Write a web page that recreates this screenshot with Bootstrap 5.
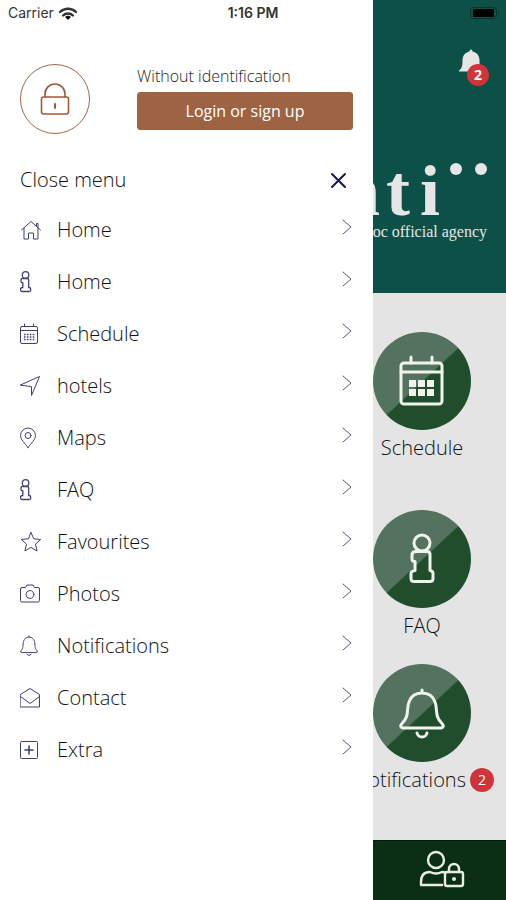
<!DOCTYPE html>
<html lang="en">
<head>
<meta charset="utf-8">
<meta name="viewport" content="width=device-width, initial-scale=1">
<title>Menu</title>
<link href="https://cdn.jsdelivr.net/npm/bootstrap@5.3.0/dist/css/bootstrap.min.css" rel="stylesheet">
<style>
body{font-family:"Open Sans","Noto Sans",sans-serif;font-weight:300;color:#111;background:#fff}
svg{fill:none;stroke:currentColor;stroke-linecap:round;stroke-linejoin:round;flex:none;display:block}
.solid{fill:currentColor;stroke:none}
.statusbar{font:400 14px/26px Inter,sans-serif;z-index:5;color:#333}
.statusbar .clock{font-weight:600}
.drawer{padding:64px 20px 24px}
.lock-ring{width:70px;height:70px;border:1px solid #a0664c;color:#a0573a}
.account{width:216px}
.account-note{font-size:16px;line-height:24px;color:#222}
.btn-login{--bs-btn-color:#fff;--bs-btn-bg:#9d6343;--bs-btn-border-color:#9d6343;--bs-btn-hover-color:#fff;--bs-btn-hover-bg:#87533a;font-size:16px;line-height:24px;border-radius:3px;padding:6px}
.menu-head{font-size:20px;line-height:32px;margin-top:30px;padding-right:4px}
.close-btn{color:#17174f}
.menu-link{height:52px;font-size:20px;color:#111;gap:13px}
.menu-link svg{color:#3f4170}
.menu-link .chev{color:#55576a;margin-top:-6px}
.menu-list{margin-top:8px}
.peek{width:133px;background:#e4e4e4}
.hero{height:293px;background:#0d5047;color:#e6e6e6;padding:48px 19px 0 0}
.bell-btn{width:30px;height:38px;margin-right:-2px;color:#e6e6e6}
.count{width:22px;height:22px;font-size:14px;line-height:22px;background:#d0343a;color:#fff}
.bell-btn .count{right:0;bottom:0}
.brand{font:700 72px/62px "Liberation Serif",serif;margin-top:74px;gap:10px}
.brand-wide{margin-right:-4px}
.brand-dots{gap:13px;padding-top:3px}
.brand-dot{width:12px;height:12px;background:currentColor}
.brand-sub{font:400 16px/20px "Liberation Serif",serif}
.tiles{padding-top:39px}
.tile{color:#111;font-size:20px;line-height:28px}
.tile-icon{width:98px;height:98px;margin-right:35px;color:#f0f2ec;background:linear-gradient(137deg,#54735f 50%,#204e2c 51%)}
.tile-name{padding-top:4px}
.tile-mid{width:98px;margin-right:35px}
.tile+.tile{margin-top:48px}
.tile+.tile.tile-near{margin-top:24px}
.tile-wide{padding-right:12px;gap:4px}
.count{font-weight:400}
.tile-wide .count{width:24px;height:24px;line-height:24px}
.dock{height:60px;background:#0a2f14;color:#e8eee4;border-top:1px solid #061c0b;padding:0 0 4px 4px}
</style>
<script src="https://cdn.jsdelivr.net/npm/bootstrap@5.3.0/dist/js/bootstrap.bundle.min.js"></script>
</head>
<body>
<svg width="0" height="0" class="position-absolute" aria-hidden="true">
<symbol id="home" viewBox="0 0 24 24"><path d="M2.500 12 12 3.500l9.500 8.500M5 10v11h4.500v-6h5v6H19V10M17.500 8V5.500h1.500v4"/></symbol>
<symbol id="info" viewBox="0 0 24 24"><g stroke-width="1.300"><circle cx="5.500" cy="5" r="3.300"/><path d="M3.500 8.500h3.800q1.400 0 1.400 1.400v7.600q2 0 2 1.500v1q0 1.500-1.500 1.500H2q-1.500 0-1.500-1.500V19q0-1.500 2.300-1.500v-4.800H2q-1-.2-1-1.300V10q0-1.500 1.200-1.500z"/></g></symbol>
<symbol id="calendar" viewBox="0 0 24 24"><rect x=".5" y="4.500" width="17" height="17" rx="1.500"/><path d="M.5 8.500h17M4.500 2v2.500M13.500 2v2.500"/><path d="M4 12.500h10.500M4 15h10.500M4 17.500h10.500" stroke-width="1.600" stroke-dasharray="1.600 1.300" stroke-linecap="butt"/></symbol>
<symbol id="plane" viewBox="0 0 24 24"><path d="m.5 11 19-8.500L11.500 21.500v-8.500z"/></symbol>
<symbol id="pin" viewBox="0 0 24 24"><path d="M8 21.500C5 17.500.5 13.500.5 9.500a7.500 7.500 0 0 1 15 0c0 4-4.500 8-7.500 12z"/><circle cx="8" cy="9.500" r="3"/></symbol>
<symbol id="star" viewBox="0 0 24 24"><path d="m11 2.500 2.800 6.300 6.900.7-5.200 4.600 1.600 6.900-6.100-3.600L4.900 21l1.600-6.900L1.300 9.500l6.900-.7z"/></symbol>
<symbol id="camera" viewBox="0 0 24 24"><path d="M2 5.500h3.500l1.500-2.500h6l1.500 2.500h3.500q1.500 0 1.500 1.500v11.500q0 1.500-1.500 1.500H2q-1.500 0-1.500-1.500V7Q.5 5.500 2 5.500z"/><circle cx="10" cy="12.500" r="4"/></symbol>
<symbol id="bell" viewBox="0 0 24 24"><path d="M9 2v1M1.500 18.500q-1.500-.3-.6-1.600C4 13.500 2.500 11 3.500 7.500 4.300 4.700 6.300 3 9 3s4.700 1.700 5.500 4.500c1 3.500-.5 6 2.600 9.400q.9 1.300-.6 1.600zM7 20.500q2 2.200 4 0"/></symbol>
<symbol id="mail" viewBox="0 0 24 24"><path d="M.5 8.500 10 2.500l9.500 6V21H.5zM.5 10.500 10 17.500l9.500-7"/></symbol>
<symbol id="plus" viewBox="0 0 24 24"><rect x=".5" y="3.500" width="17" height="17" rx="1"/><path d="M9 8v8M5 12h8" stroke-width="1.600"/></symbol>
<symbol id="chev" viewBox="0 0 12 18"><path d="m2 2 8 7-8 7"/></symbol>
</svg>
<div class="d-flex min-vh-100 position-relative">
<header class="statusbar position-absolute top-0 start-0 w-100 d-flex align-items-center">
<div class="d-flex align-items-center gap-1 ps-2 flex-fill w-25">Carrier
<svg width="20" height="15" viewBox="0 0 20 15" stroke-width="2.400" stroke="#111" stroke-linecap="butt"><path d="M2 6a11.500 11.500 0 0 1 16 0M5 9.500a7.200 7.200 0 0 1 10 0"/><path d="m10 14-3-3a4.200 4.200 0 0 1 6 0z" fill="#111" stroke="none"/></svg></div>
<div class="clock text-center">1:16 PM</div>
<div class="d-flex justify-content-end flex-fill w-25"><svg class="me-1" width="32" height="14" viewBox="0 0 32 14" aria-label="Battery full"><rect x=".5" y="1.500" width="26" height="11" rx="3" stroke="#07342d"/><rect x="3" y="3" width="21" height="8" rx="1" fill="#000" stroke="none"/><path d="M28 5v4q2-2 0-4" fill="#07342d" stroke="none"/></svg></div>
</header>
<nav class="drawer flex-grow-1 bg-white" aria-label="Main menu">
<div class="d-flex justify-content-between">
<div class="lock-ring rounded-circle d-flex align-items-center justify-content-center">
<svg width="30" height="36" viewBox="0 0 30 36" stroke-width="1.600"><rect x="1.500" y="16" width="27" height="17" rx="2"/><path d="M5 16v-3a10 10 0 0 1 20 0v3"/><path d="M15 23v4" stroke-width="2"/></svg></div>
<div class="account"><div class="account-note">Without identification</div>
<button type="button" class="btn btn-login w-100 mt-1">Login or sign up</button></div>
</div>
<div class="menu-head d-flex justify-content-between align-items-center"><span>Close menu</span>
<button type="button" class="close-btn border-0 bg-transparent p-0" aria-label="Close menu"><svg width="20" height="18" viewBox="0 0 20 18" stroke-width="2"><path d="m3 3 13 13M16 3 3 16"/></svg></button></div>
<ul class="menu-list list-unstyled mb-0">
<li><a href="#" class="menu-link d-flex align-items-center text-decoration-none"><svg width="24" height="24" viewBox="1 0 24 24"><use href="#home" width="24" height="24"/></svg><span class="flex-grow-1">Home</span><svg class="chev" width="12" height="18"><use href="#chev"/></svg></a></li>
<li><a href="#" class="menu-link d-flex align-items-center text-decoration-none"><svg width="24" height="24"><use href="#info"/></svg><span class="flex-grow-1">Home</span><svg class="chev" width="12" height="18"><use href="#chev"/></svg></a></li>
<li><a href="#" class="menu-link d-flex align-items-center text-decoration-none"><svg width="24" height="24"><use href="#calendar"/></svg><span class="flex-grow-1">Schedule</span><svg class="chev" width="12" height="18"><use href="#chev"/></svg></a></li>
<li><a href="#" class="menu-link d-flex align-items-center text-decoration-none"><svg width="24" height="24"><use href="#plane"/></svg><span class="flex-grow-1">hotels</span><svg class="chev" width="12" height="18"><use href="#chev"/></svg></a></li>
<li><a href="#" class="menu-link d-flex align-items-center text-decoration-none"><svg width="24" height="24"><use href="#pin"/></svg><span class="flex-grow-1">Maps</span><svg class="chev" width="12" height="18"><use href="#chev"/></svg></a></li>
<li><a href="#" class="menu-link d-flex align-items-center text-decoration-none"><svg width="24" height="24"><use href="#info"/></svg><span class="flex-grow-1">FAQ</span><svg class="chev" width="12" height="18"><use href="#chev"/></svg></a></li>
<li><a href="#" class="menu-link d-flex align-items-center text-decoration-none"><svg width="24" height="24"><use href="#star"/></svg><span class="flex-grow-1">Favourites</span><svg class="chev" width="12" height="18"><use href="#chev"/></svg></a></li>
<li><a href="#" class="menu-link d-flex align-items-center text-decoration-none"><svg width="24" height="24"><use href="#camera"/></svg><span class="flex-grow-1">Photos</span><svg class="chev" width="12" height="18"><use href="#chev"/></svg></a></li>
<li><a href="#" class="menu-link d-flex align-items-center text-decoration-none"><svg width="24" height="24"><use href="#bell"/></svg><span class="flex-grow-1">Notifications</span><svg class="chev" width="12" height="18"><use href="#chev"/></svg></a></li>
<li><a href="#" class="menu-link d-flex align-items-center text-decoration-none"><svg width="24" height="24"><use href="#mail"/></svg><span class="flex-grow-1">Contact</span><svg class="chev" width="12" height="18"><use href="#chev"/></svg></a></li>
<li><a href="#" class="menu-link d-flex align-items-center text-decoration-none"><svg width="24" height="24"><use href="#plus"/></svg><span class="flex-grow-1">Extra</span><svg class="chev" width="12" height="18"><use href="#chev"/></svg></a></li>
</ul>
</nav>
<main class="peek flex-shrink-0 overflow-hidden d-flex flex-column">
<div class="hero d-flex flex-column align-items-end">
<button type="button" class="bell-btn d-flex align-items-start position-relative border-0 bg-transparent p-0" aria-label="Notifications, 2 new"><svg class="solid" width="24" height="26" viewBox="0 3 24 25"><path d="M12 4q1.500 0 1.500 2C18 7 20.500 10 20.500 15c0 5 .5 8 3.500 10v1H0v-1c3-2 3.500-5 3.500-10 0-5 2.500-8 7-9q0-2 1.500-2z"/></svg><span class="count position-absolute rounded-circle fw-bold text-center">2</span></button>
<div class="brand d-flex"><span class="brand-wide">n</span><span>t</span><span>i</span><div class="brand-dots d-flex"><span class="brand-dot rounded-circle"></span><span class="brand-dot rounded-circle"></span></div></div>
<div class="brand-sub text-nowrap">spoc official agency</div>
</div>
<div class="tiles flex-grow-1 d-flex flex-column">
<a href="#" class="tile text-decoration-none d-flex flex-column align-items-end"><span class="tile-icon rounded-circle d-flex align-items-center justify-content-center"><svg width="46" height="52" viewBox="0 0 46 52" stroke-width="3"><rect x="2" y="8" width="41" height="41" rx="3"/><path d="M2 17h41M12 8V2M33 8V2"/><path class="solid" d="M10 25h7v7h-7zM19 25h7v7h-7zM28 25h7v7h-7zM10 34h7v7h-7zM19 34h7v7h-7zM28 34h7v7h-7z"/></svg></span><span class="tile-name tile-mid text-center">Schedule</span></a>
<a href="#" class="tile text-decoration-none d-flex flex-column align-items-end"><span class="tile-icon rounded-circle d-flex align-items-center justify-content-center"><svg width="26" height="52" viewBox="0 0 26 52" stroke-width="3"><circle cx="13" cy="10" r="8"/><path d="M7 18.500h11q3 0 3 3v16q3 .5 3 3v5q0 3-3 3H5q-3 0-3-3v-5q0-2.500 4-3v-9H5q-2-.3-2-2.500v-4q0-3.500 4-3.500z"/></svg></span><span class="tile-name tile-mid text-center">FAQ</span></a>
<a href="#" class="tile tile-near text-decoration-none d-flex flex-column align-items-end"><span class="tile-icon rounded-circle d-flex align-items-center justify-content-center"><svg width="46" height="52" viewBox="0 0 46 52" stroke-width="3"><path d="M23 3v3M4 41q-4-1-1-4.500C11 29 7 22 10 15c2-6 7-9 13-9s11 3 13 9c3 7-1 14 7 21.500q3 3.500-1 4.500z"/><path d="M18 46q1 4 5 4t5-4"/></svg></span><span class="tile-name tile-wide d-flex align-items-center"><span>Notifications</span><span class="count rounded-circle text-center">2</span></span></a>
</div>
<footer class="dock d-flex align-items-center justify-content-center"><button type="button" class="border-0 bg-transparent p-0 text-reset" aria-label="Private profile"><svg width="46" height="38" viewBox="0 0 46 38" stroke-width="2.400"><circle cx="17" cy="10" r="8"/><path d="M23 35H2v-3q0-10 9-10 6 3 12 0 2 0 3.500 1"/><rect x="26" y="22" width="18" height="14" rx="2"/><path d="M30 22v-3a5 5 0 0 1 10 0v3"/><circle class="solid" cx="35" cy="29" r="2"/></svg></button></footer>
</main>
</div>
</body>
</html>
